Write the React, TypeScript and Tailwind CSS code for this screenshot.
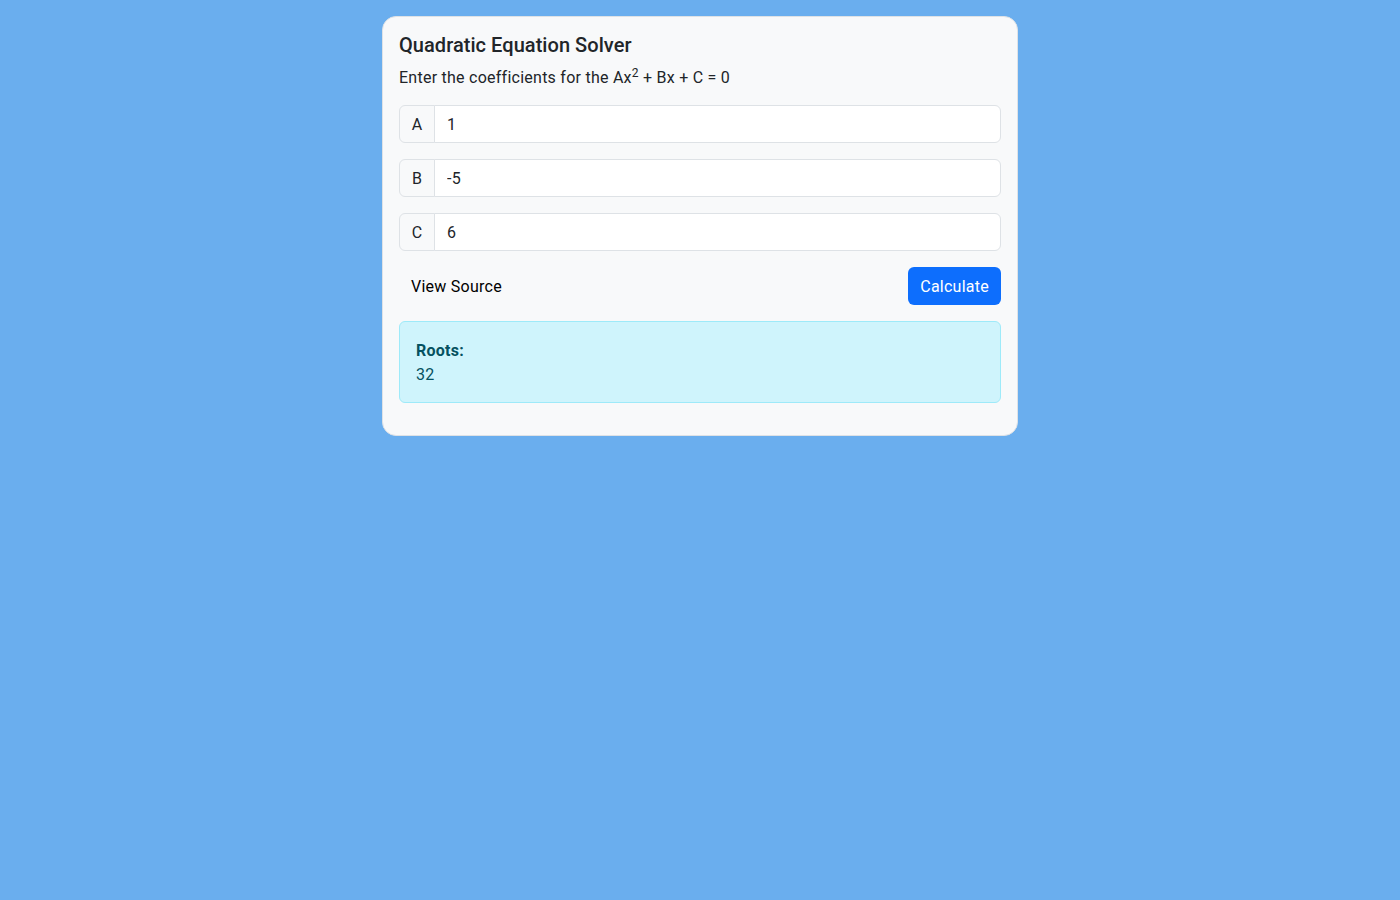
import { useState } from "react";

function CoefficientInput({
  label,
  value,
  onChange,
}: {
  label: string;
  value: string;
  onChange: (v: string) => void;
}) {
  return (
    <div className="mb-4 flex h-[38px] w-full">
      <span className="flex w-[36px] items-center justify-center rounded-l-[6px] border border-[#dee2e6] bg-[#f8f9fa] pt-px text-base text-[#212529]">
        {label}
      </span>
      <input
        type="number"
        value={value}
        onChange={(e) => onChange(e.target.value)}
        className="-ml-px min-w-0 flex-1 rounded-r-[6px] border border-[#dee2e6] bg-white px-3 pt-px text-base tracking-[0.25px] text-[#212529] outline-none [appearance:textfield] [&::-webkit-inner-spin-button]:appearance-none [&::-webkit-outer-spin-button]:appearance-none"
      />
    </div>
  );
}

export default function App() {
  const [a, setA] = useState("1");
  const [b, setB] = useState("-5");
  const [c, setC] = useState("6");
  const [roots, setRoots] = useState("32");

  function calculate() {
    const A = parseFloat(a);
    const B = parseFloat(b);
    const C = parseFloat(c);
    const d = B * B - 4 * A * C;
    if (d < 0) {
      setRoots("No real roots");
      return;
    }
    const r1 = (-B + Math.sqrt(d)) / (2 * A);
    const r2 = (-B - Math.sqrt(d)) / (2 * A);
    setRoots(`${r1}${r2}`);
  }

  return (
    <div className="min-h-screen bg-[#6aaeee] pt-4 font-['Roboto',sans-serif] text-[#212529]">
      <div className="mx-auto w-[636px] rounded-[14px] border border-[#dee2e6] bg-[#f8f9fa] p-4">
        <h5 className="mb-2 text-[20px] leading-[24px] font-medium tracking-[0.05px]">Quadratic Equation Solver</h5>
        <p className="mb-[15px] pt-px text-base leading-6 tracking-[0.25px]">
          Enter the coefficients for the Ax<sup className="text-[12px]">2</sup> + Bx + C = 0
        </p>

        <CoefficientInput label="A" value={a} onChange={setA} />
        <CoefficientInput label="B" value={b} onChange={setB} />
        <CoefficientInput label="C" value={c} onChange={setC} />

        <div className="mb-4 flex items-center justify-between tracking-[0.25px]">
          <button type="button" className="h-[38px] rounded-[6px] px-3 pt-px text-base text-black">
            View Source
          </button>
          <button
            type="button"
            onClick={calculate}
            className="h-[38px] rounded-[6px] bg-[#0d6efd] px-3 pt-px text-base text-white hover:bg-[#0b5ed7]"
          >
            Calculate
          </button>
        </div>

        <div className="mb-4 rounded-[6px] border border-[#9eeaf9] bg-[#cff4fc] px-4 pt-[17px] pb-[15px] tracking-[0.25px] text-[#055160]">
          <div className="leading-6 font-bold">Roots:</div>
          <div className="leading-6">{roots}</div>
        </div>
      </div>
    </div>
  );
}
